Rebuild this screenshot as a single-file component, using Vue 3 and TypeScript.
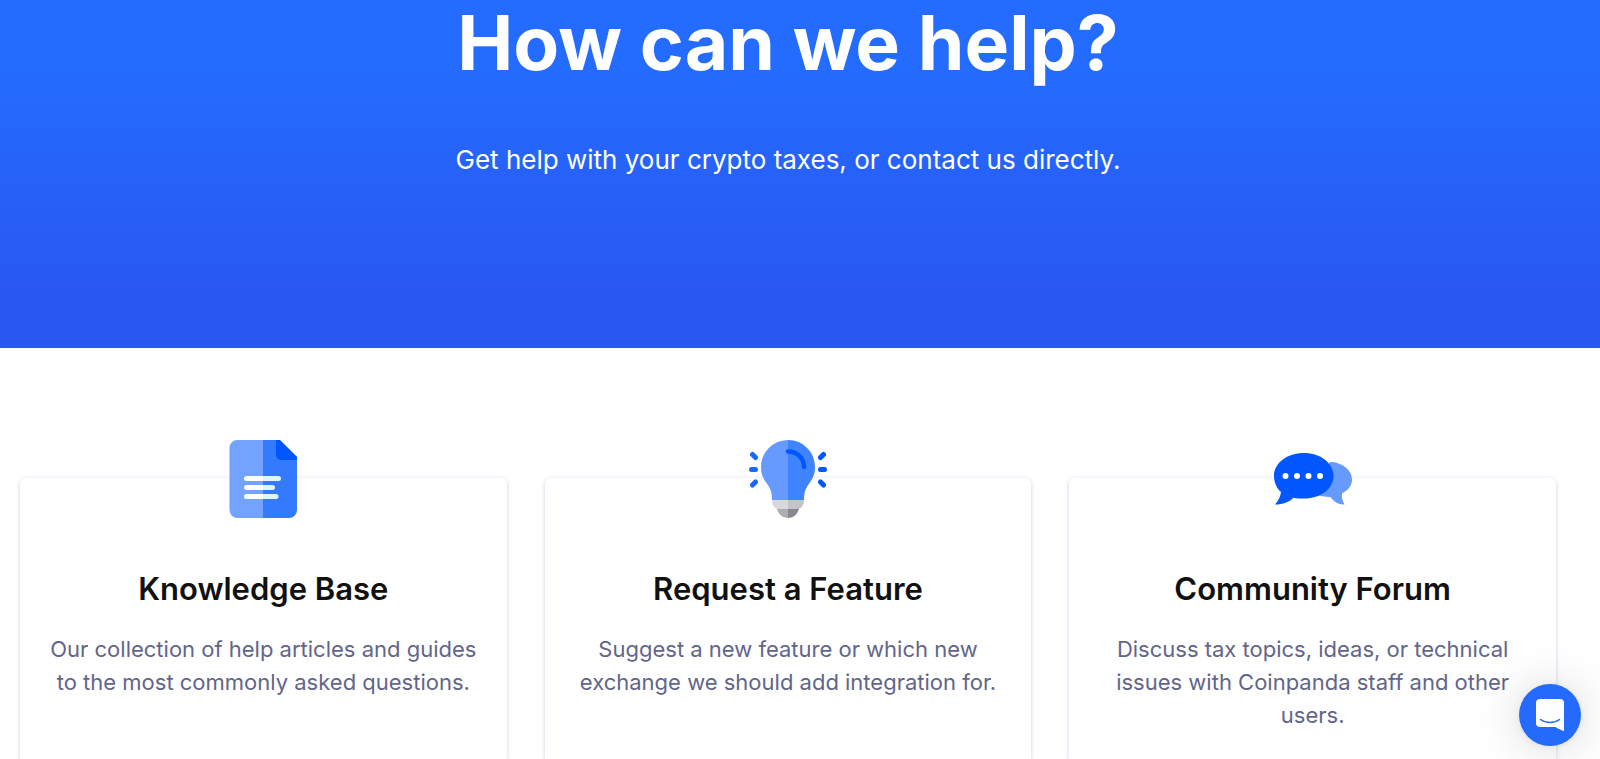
<script setup lang="ts">
interface HelpCard {
  icon: 'document' | 'bulb' | 'chat'
  title: string
  text: string
}

const cards: HelpCard[] = [
  {
    icon: 'document',
    title: 'Knowledge Base',
    text: 'Our collection of help articles and guides to the most commonly asked questions.',
  },
  {
    icon: 'bulb',
    title: 'Request a Feature',
    text: 'Suggest a new feature or which new exchange we should add integration for.',
  },
  {
    icon: 'chat',
    title: 'Community Forum',
    text: 'Discuss tax topics, ideas, or technical issues with Coinpanda staff and other users.',
  },
]
</script>

<template>
  <div class="page">
    <header class="hero">
      <h1>How can we help?</h1>
      <p>Get help with your crypto taxes, or contact us directly.</p>
    </header>

    <main class="cards">
      <article v-for="card in cards" :key="card.title" class="card">
        <svg v-if="card.icon === 'document'" class="icon" viewBox="0 0 78 78" aria-hidden="true">
          <path fill="#73a2ff" d="M39 0H13.500a8 8 0 0 0-8 8v62a8 8 0 0 0 8 8H39z" />
          <path fill="#337aff" d="M39 0h16.500L73 17v53a8 8 0 0 1-8 8H39z" />
          <path fill="#0057ff" d="M52 0h4l17 17v3H57a5 5 0 0 1-5-5z" />
          <g stroke-width="5" stroke-linecap="round">
            <path stroke="#e0f4ff" d="M39 38.500h15.500M39 47.500h9.500M39 56.500h13" />
            <path stroke="#fff" d="M22.500 38.500H36M22.500 47.500H36M22.500 56.500H36" />
          </g>
          <path fill="#fff" d="M34 36h5v5h-5zM34 45h5v5h-5zM34 54h5v5h-5z" />
        </svg>

        <svg v-else-if="card.icon === 'bulb'" class="icon" viewBox="0 0 78 78" aria-hidden="true">
          <path fill="#aeadb3" d="M39 67H27.500C29 74 33 78 39 78z" />
          <path fill="#88878f" d="M39 67h11.500C49 74 45 78 39 78z" />
          <path fill="#d9d9dc" d="M39 58H23v2.500q0 8.500 8 8.500h8z" />
          <path fill="#c5c4ca" d="M39 58h16v2.500q0 8.500-8 8.500h-8z" />
          <path fill="#669aff" d="M39 0C24 0 12 12 12 27c0 7 2 11 5.500 16C21 48 23 51 23 60h16z" />
          <path fill="#4083ff" d="M39 0c15 0 27 12 27 27 0 7-2 11-5.500 16C57 48 55 51 55 60H39z" />
          <path fill="none" stroke="#0057ff" stroke-width="4.500" stroke-linecap="round" d="M39 11.500c9.500 0 16 7 16 15.500" />
          <path stroke="#1769ff" stroke-width="5" stroke-linecap="round" d="m3.500 14.500 3 3M2.500 29.500h4M3.500 45l3-3" />
          <path stroke="#0057ff" stroke-width="5" stroke-linecap="round" d="m74.500 14.500-3 3M71.500 29.500h4M74.500 45l-3-3" />
        </svg>

        <svg v-else class="icon" viewBox="0 0 78 78" aria-hidden="true">
          <path fill="#669aff" d="M56 22c12 0 22 8 22 17.500 0 5.500-3 10.500-10 14-.5 4 .5 7.500 2.500 11-6 0-10.500-2.500-14-7.500-5 0-12-1-17-4z" />
          <path fill="#0057ff" d="M30 13c16.500 0 29.500 10 29.500 23S46.500 58.500 30 58.500c-4 0-7.500 0-10.500-.8C15 62 9 64.500 1 64.500 5 60 6.500 56 7 52 2.500 48 0 42 0 36c0-13 13-23 30-23z" />
          <g fill="#fff">
            <circle cx="11.500" cy="36" r="3" />
            <circle cx="23" cy="36" r="3" />
            <circle cx="34.500" cy="36" r="3" />
            <circle cx="46" cy="36" r="3" />
          </g>
        </svg>

        <h2>{{ card.title }}</h2>
        <p>{{ card.text }}</p>
      </article>
    </main>

    <button class="chat" type="button" aria-label="Open chat">
      <svg viewBox="0 0 28 32" aria-hidden="true">
        <path fill="#fff" d="M4 0h20a4 4 0 0 1 4 4v28s-4.700-1.500-8.500-4H4a4 4 0 0 1-4-4V4a4 4 0 0 1 4-4z" />
        <path fill="none" stroke="#246bfd" stroke-width="1.500" stroke-linecap="round" d="M4.500 20.500c5.500 4 13.500 4 19 0" />
      </svg>
    </button>
  </div>
</template>

<style>
body {
  margin: 0;
  background: #fff;
}
</style>

<style scoped>
.page {
  display: flex;
  flex-direction: column;
  min-height: 100vh;
  font-family: Inter, 'Liberation Sans', sans-serif;
  text-align: center;
}

h1,
h2,
p {
  margin: 0;
}

.hero {
  box-sizing: border-box;
  height: 348px;
  padding-right: 24px;
  color: #fff;
  background: linear-gradient(#246bff 0%, #246bff 20%, #2957f3 85%);
}

.hero h1 {
  font-size: 75px;
  font-weight: 700;
  line-height: 86px;
}

.hero p {
  margin-top: 54px;
  font-size: 26px;
  line-height: 40px;
}

.cards {
  display: grid;
  flex: 1;
  grid-template-columns: repeat(3, 1fr);
  gap: 38px;
  padding: 130px 44px 0 20px;
}

.card {
  padding: 0 24px;
  border-radius: 6px 6px 0 0;
  background: #fff;
  box-shadow: 0 1px 4px rgba(30, 80, 160, 0.26);
}

.icon {
  display: block;
  width: 78px;
  height: 78px;
  margin: -38px auto 0;
}

.card h2 {
  margin-top: 50px;
  color: #111;
  font-size: 31px;
  font-weight: 600;
  line-height: 42px;
}

.card p {
  margin-top: 23px;
  color: #62658a;
  font-size: 22px;
  font-weight: 400;
  line-height: 33px;
}

.chat {
  position: fixed;
  right: 19px;
  bottom: 13px;
  display: grid;
  width: 62px;
  height: 62px;
  padding: 0;
  place-items: center;
  border: 0;
  border-radius: 50%;
  background: #246bfd;
  box-shadow: 0 1px 8px rgba(0, 0, 0, 0.08), 0 2px 48px rgba(0, 0, 0, 0.16);
  cursor: pointer;
}

.chat svg {
  width: 28px;
  height: 32px;
}
</style>
